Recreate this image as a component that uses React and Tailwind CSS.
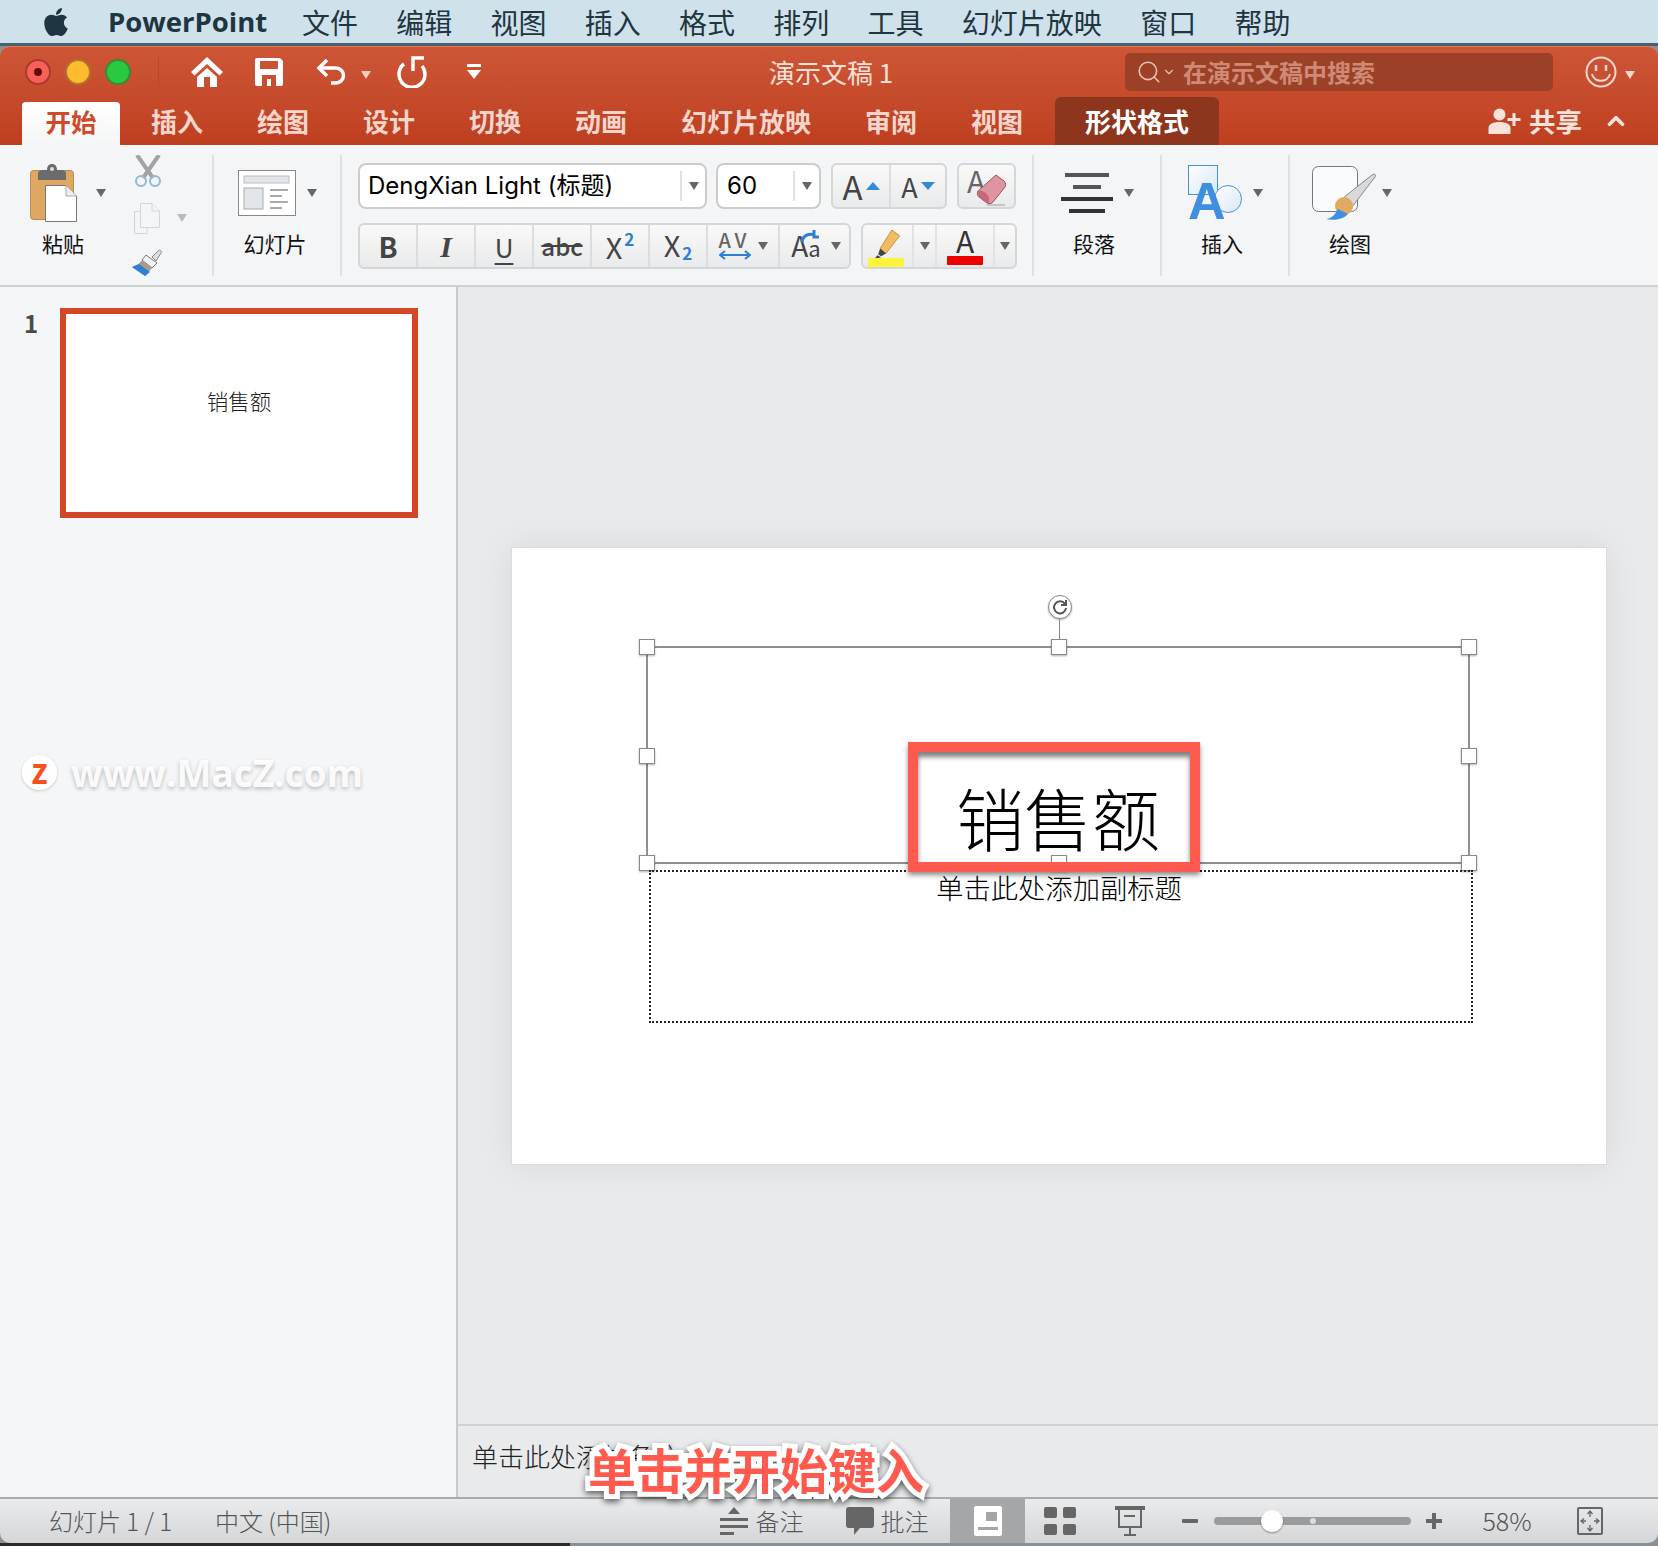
import { FaApple } from 'react-icons/fa'
import { Search, ChevronDown, ChevronUp } from 'lucide-react'

const menuItems = ['文件', '编辑', '视图', '插入', '格式', '排列', '工具', '幻灯片放映', '窗口', '帮助']
const tabs = ['插入', '绘图', '设计', '切换', '动画', '幻灯片放映', '审阅', '视图']

function Arrow({ className = 'border-t-[#666]' }) {
  return <span className={`inline-block w-0 h-0 border-x-[5px] border-x-transparent border-t-[8px] ${className}`} />
}

function HomeIcon() {
  return (
    <svg width="32" height="30" viewBox="0 0 32 30" fill="#fff">
      <path d="M16 0 32 15 28.500 18.500 16 7 3.500 18.500 0 15Z" />
      <path d="M6 20 16 11 26 20V30H19V20H13V30H6Z" />
    </svg>
  )
}

function SaveIcon() {
  return (
    <svg width="28" height="28" viewBox="0 0 28 28" fill="#fff" fillRule="evenodd">
      <path d="M2 0H25L28 3V26A2 2 0 0 1 26 28H2A2 2 0 0 1 0 26V2A2 2 0 0 1 2 0ZM5 3V11H23V3ZM7 17V28H21V17ZM12 21H16V28H12Z" />
    </svg>
  )
}

function UndoIcon() {
  return (
    <svg width="32" height="28" viewBox="0 0 32 28" fill="none" stroke="#fff" strokeWidth="3.500">
      <path d="M11 2 3 10 11 18" />
      <path d="M3 10H20A7.500 7.500 0 0 1 20 25H15" />
    </svg>
  )
}

function RedoIcon() {
  return (
    <svg width="33" height="32" viewBox="0 0 33 32" fill="none" stroke="#fff" strokeWidth="3.500">
      <path d="M9 8A13 13 0 1 0 27 10" />
      <path d="M18 15V2H29" />
    </svg>
  )
}

function SmileyIcon() {
  return (
    <svg width="32" height="32" viewBox="0 0 32 32" fill="none" stroke="#f5d9d0" strokeWidth="2">
      <circle cx="16" cy="16" r="14.500" />
      <path d="M11 9V15M21 9V15" strokeWidth="2.500" />
      <path d="M7 18C9 27 23 27 25 18" />
    </svg>
  )
}

function ShareIcon() {
  return (
    <svg width="33" height="26" viewBox="0 0 32 26" fill="#f8e2da">
      <circle cx="11" cy="6.500" r="6" />
      <path d="M0 26V20C0 16 5 14 11 14S22 16 22 20V26Z" />
      <path d="M24 5h3v5h5v3h-5v5h-3v-5h-5v-3h5Z" />
    </svg>
  )
}

function PasteIcon() {
  return (
    <svg width="47" height="58" viewBox="0 0 47 58">
      <rect x="0.500" y="6.500" width="43" height="49" rx="3" fill="#dfa862" stroke="#b88a4e" />
      <path d="M8 16V10C8 7 10 6 13 6H17C17 2 19 0 22 0S27 2 27 6H31C34 6 36 7 36 10V16Z" fill="#6b6b6b" />
      <circle cx="22" cy="5" r="2" fill="#ddd" />
      <path d="M15.500 21.500H36L46.500 32V57.500H15.500Z" fill="#fff" stroke="#777" />
      <path d="M36 21.500V32H46.500" fill="#eee" stroke="#aaa" />
    </svg>
  )
}

function ScissorsIcon() {
  return (
    <svg width="28" height="32" viewBox="0 0 28 32" fill="none">
      <path d="M3 0 19 23M25 0 9 23" stroke="#a3a3a3" strokeWidth="4" />
      <circle cx="7" cy="26" r="5" stroke="#8fb8da" strokeWidth="2" />
      <circle cx="21" cy="26" r="5" stroke="#8fb8da" strokeWidth="2" />
    </svg>
  )
}

function CopyIcon() {
  return (
    <svg width="26" height="31" viewBox="0 0 26 31" fill="#f4f5f6" stroke="#d3d4d6">
      <path d="M.5 8.500H13V30.500H.5Z" />
      <path d="M6.500.5H18L25.500 8V24.500H6.500Z" />
      <path d="M18 .5V8H25.500" />
    </svg>
  )
}

function BrushIcon() {
  return (
    <svg width="32" height="28" viewBox="0 0 32 28">
      <path d="M22 8 28 2C30 0 32 2 31 4L26 12Z" fill="#ddd" stroke="#888" />
      <path d="M16 6 27 14 22 19 12 11Z" fill="#f2f2f2" stroke="#777" />
      <path d="M12 11 22 19 15 27 2 18C6 17 9 15 12 11Z" fill="#a89c90" />
      <path d="M2 18 9 15 20 23 15 27Z" fill="#2f7fd4" />
    </svg>
  )
}

function SlideIcon() {
  return (
    <svg width="58" height="46" viewBox="0 0 58 46" fill="none">
      <rect x=".5" y=".5" width="57" height="45" fill="#fff" stroke="#888" />
      <rect x="6" y="6" width="45" height="7" fill="#e3e6e9" stroke="#bbb" />
      <rect x="6" y="18" width="19" height="21" fill="#e3e6e9" stroke="#aaa" />
      <path d="M32 20H50M32 26H44M32 32H50M32 38H44" stroke="#aaa" strokeWidth="2" />
    </svg>
  )
}

function EraserIcon() {
  return (
    <svg width="32" height="32" viewBox="0 0 32 32">
      <path d="M12 31H30" stroke="#c4c4c4" strokeWidth="2" />
      <path d="M21 1 29 7C31 9 31 11 30 13L18 28C16 30 14 30 12 29L4 23C2 21 2 19 3 17Z" fill="#dd95a2" stroke="#a14d5e" />
      <path d="M3 17 C8 16 12 19 14 24L14 30 4 23Z" fill="#c4687a" />
    </svg>
  )
}

function MarkerIcon() {
  return (
    <svg width="28" height="30" viewBox="0 0 28 30">
      <path d="M20 0 28 6 14 24 8 19Z" fill="#f2bc63" stroke="#c9913d" />
      <path d="M8 19 14 24 9 27 6 25Z" fill="#444" />
      <path d="M5 26 9 28 2 30Z" fill="#444" />
    </svg>
  )
}

function ParagraphIcon() {
  return (
    <div className="flex flex-col items-center gap-[8px] w-[52px]">
      <div className="h-[4px] w-[44px] bg-[#555]" />
      <div className="h-[4px] w-[28px] bg-[#555]" />
      <div className="h-[4px] w-[52px] bg-[#333]" />
      <div className="h-[4px] w-[36px] bg-[#333]" />
    </div>
  )
}

function InsertIcon() {
  return (
    <div className="relative w-[54px] h-[56px]">
      <svg width="54" height="56" viewBox="0 0 54 56">
        <defs>
          <linearGradient id="insertFill" x1="0" y1="0" x2="1" y2="1">
            <stop offset="0" stopColor="#fff" />
            <stop offset="1" stopColor="#d6e7f6" />
          </linearGradient>
        </defs>
        <rect x=".5" y=".5" width="29" height="29" fill="url(#insertFill)" stroke="#4a90d9" />
        <circle cx="40" cy="34" r="13.500" fill="url(#insertFill)" stroke="#4a90d9" />
      </svg>
      <span className="absolute left-0 top-[13px] text-[52px] leading-[46px] font-bold text-[#3f8fe0] font-['Liberation_Sans',sans-serif]">A</span>
    </div>
  )
}

function DrawIcon() {
  return (
    <svg width="64" height="54" viewBox="0 0 64 54">
      <rect x=".5" y=".5" width="45" height="45" rx="6" fill="#fafbfc" stroke="#777" />
      <path d="M31 32 60 9C63 7 64 9 63 11L40 41Z" fill="#d7d9db" stroke="#888" />
      <circle cx="32" cy="40" r="9" fill="#e0aa63" />
      <path d="M14 53C22 52 24 46 26 43L36 48C32 53 22 55 14 53Z" fill="#3f8fe0" />
    </svg>
  )
}

function Handle({ className }) {
  return <div className={`absolute w-[16px] h-[16px] bg-white border border-[#888] shadow-[0_1px_2px_rgba(0,0,0,0.3)] ${className}`} />
}

function Seg({ w, border = true, children }) {
  return (
    <div className={`${w} h-full flex items-center justify-center relative ${border ? 'border-r-2 border-[#dcdddf]' : ''}`}>
      {children}
    </div>
  )
}

const groupCls = 'flex h-[46px] rounded-[6px] border-2 border-[#d5d6d8] bg-linear-to-b from-[#f9f9f9] to-[#e9eaeb] text-[#444]'

function FontGroup() {
  return (
    <div className="flex flex-col gap-[14px] mt-[10px] pt-[8px] pl-[16px] w-[692px] border-r-2 border-[#dfe0e2] mb-[9px]">
      <div className="flex">
        <div className="w-[349px] h-[46px] rounded-[8px] border-2 border-[#ccc] bg-white flex items-center pl-[8px]">
          <span className="text-[24px] text-black w-[312px] whitespace-nowrap font-['Inter','Noto_Sans_CJK_SC',sans-serif]">DengXian Light (标题)</span>
          <div className="flex items-center justify-center flex-1 h-[30px] border-l-2 border-[#e2e2e2]"><Arrow /></div>
        </div>
        <div className="w-[105px] h-[46px] ml-[9px] rounded-[8px] border-2 border-[#ccc] bg-white flex items-center pl-[9px]">
          <span className="text-[24px] text-black w-[66px] font-['Inter',sans-serif]">60</span>
          <div className="flex items-center justify-center flex-1 h-[30px] border-l-2 border-[#e2e2e2]"><Arrow /></div>
        </div>
        <div className={`${groupCls} w-[116px] ml-[10px]`}>
          <Seg w="w-[58px]">
            <span className="text-[33px] leading-none">A</span>
            <span className="ml-[3px] w-0 h-0 border-x-[7px] border-x-transparent border-b-[8px] border-b-[#2f8ad8]" />
          </Seg>
          <Seg w="flex-1" border={false}>
            <span className="text-[27px] leading-none">A</span>
            <span className="ml-[3px] w-0 h-0 border-x-[7px] border-x-transparent border-t-[8px] border-t-[#2f8ad8]" />
          </Seg>
        </div>
        <div className={`${groupCls} w-[59px] ml-[10px] relative`}>
          <span className="absolute left-[8px] -top-[7px] text-[30px] text-[#666]">A</span>
          <div className="absolute left-[16px] top-[9px]"><EraserIcon /></div>
        </div>
      </div>
      <div className="flex">
        <div className={`${groupCls} w-[493px]`}>
          <Seg w="w-[58px]"><span className="text-[28px] font-bold">B</span></Seg>
          <Seg w="w-[58px]"><span className="text-[30px] font-bold italic font-['Liberation_Serif',serif]">I</span></Seg>
          <Seg w="w-[58px]"><span className="text-[26px] underline underline-offset-[5px]">U</span></Seg>
          <Seg w="w-[58px]"><span className="text-[24px] font-medium line-through">abc</span></Seg>
          <Seg w="w-[58px]">
            <span className="text-[29px] leading-none">X</span>
            <span className="text-[17px] font-bold text-[#2f7fd4] -mt-[14px] ml-[2px]">2</span>
          </Seg>
          <Seg w="w-[58px]">
            <span className="text-[29px] leading-none -mt-[4px]">X</span>
            <span className="text-[17px] font-bold text-[#2f7fd4] mt-[14px] ml-[2px]">2</span>
          </Seg>
          <Seg w="w-[72px]">
            <div className="flex flex-col items-center mr-[7px] -mt-[3px]">
              <span className="text-[20px] leading-[20px] font-medium tracking-[4px] text-[#666]">AV</span>
              <svg width="32" height="10" viewBox="0 0 32 10" fill="none" stroke="#2f7fd4" strokeWidth="2">
                <path d="M1 5H31M6 1 1 5 6 9M26 1 31 5 26 9" />
              </svg>
            </div>
            <Arrow />
          </Seg>
          <Seg w="flex-1" border={false}>
            <div className="relative w-[36px] mr-[7px] text-center">
              <span className="text-[28px] leading-none">A</span>
              <span className="text-[22px] leading-none">a</span>
              <svg className="absolute left-[12px] -top-[1px]" width="20" height="14" viewBox="0 0 20 14" fill="none" stroke="#2f7fd4" strokeWidth="3">
                <path d="M2 12C3 5 9 3 15 5M14 0V7H19" />
              </svg>
            </div>
            <Arrow />
          </Seg>
        </div>
        <div className={`${groupCls} w-[156px] ml-[10px]`}>
          <div className="w-[49px] h-full flex flex-col items-center pt-[5px] pr-[3px]">
            <MarkerIcon />
            <div className="w-[36px] h-[9px] bg-[#fbf43a] -mt-[1px] rounded-[1px]" />
          </div>
          <div className="w-[25px] h-full flex items-center justify-center border-x-2 border-[#e2e3e5]"><Arrow /></div>
          <div className="w-[56px] h-full flex flex-col items-center">
            <span className="text-[30px] leading-[31px] text-[#333]">A</span>
            <div className="w-[36px] h-[9px] bg-[#ee0000] rounded-[1px]" />
          </div>
          <div className="flex-1 h-full flex items-center justify-center border-l-2 border-[#e2e3e5]"><Arrow /></div>
        </div>
      </div>
    </div>
  )
}

function BigButton({ icon, label, width, pad, labelW = 'w-[66px]' }) {
  return (
    <div className={`${width} ${pad} mb-[9px] mt-[10px] border-r-2 border-[#dfe0e2] flex flex-col`}>
      <div className="h-[75px] flex items-center gap-[11px]">
        {icon}
        <Arrow />
      </div>
      <span className={`text-[21px] leading-[30px] -mt-[2px] text-[#111] ${labelW} text-center whitespace-nowrap`}>{label}</span>
    </div>
  )
}

function Ribbon() {
  return (
    <div className="h-[142px] flex border-b-2 border-[#cfd0d2] bg-[#f4f5f6]">
      <div className="w-[214px] mt-[10px] mb-[9px] border-r-2 border-[#dfe0e2] flex pl-[30px]">
        <div className="w-[104px] flex flex-col">
          <div className="h-[75px] flex items-center gap-[19px]">
            <PasteIcon />
            <Arrow />
          </div>
          <span className="text-[21px] leading-[30px] -mt-[2px] text-[#111] pl-[12px]">粘贴</span>
        </div>
        <div className="flex flex-col justify-between h-[122px] w-[60px]">
          <ScissorsIcon />
          <div className="flex items-center gap-[17px]">
            <CopyIcon />
            <Arrow className="border-t-[#bbb]" />
          </div>
          <div className="-ml-[4px]"><BrushIcon /></div>
        </div>
      </div>
      <BigButton icon={<SlideIcon />} label="幻灯片" width="w-[128px]" pad="pl-[24px] pr-0" labelW="w-[74px]" />
      <FontGroup />
      <BigButton icon={<ParagraphIcon />} label="段落" width="w-[128px]" pad="pl-[27px]" />
      <BigButton icon={<InsertIcon />} label="插入" width="w-[128px]" pad="pl-[26px]" labelW="w-[68px]" />
      <div className="mt-[10px] mb-[9px] pl-[22px] flex flex-col">
        <div className="h-[75px] flex items-center gap-[6px]">
          <DrawIcon />
          <Arrow />
        </div>
        <span className="text-[21px] leading-[30px] -mt-[2px] text-[#111] w-[76px] text-center">绘图</span>
      </div>
    </div>
  )
}

function TitleBar() {
  return (
    <div className="rounded-t-[10px] bg-linear-to-b from-[#cd5636] to-[#be3f20] border-t border-[#de7a5d]">
      <div className="h-[49px] flex items-center relative">
        <div className="flex gap-[14px] pl-[25px]">
          <div className="w-[26px] h-[26px] rounded-full bg-[#fb5f57] border-2 border-[#a93a33] flex items-center justify-center">
            <div className="w-[8px] h-[8px] rounded-full bg-[#5e0d09]" />
          </div>
          <div className="w-[26px] h-[26px] rounded-full bg-[#fdbb2e] border-2 border-[#b3742b]" />
          <div className="w-[26px] h-[26px] rounded-full bg-[#2ac940] border-2 border-[#2f8f3a]" />
        </div>
        <div className="w-px h-[30px] bg-[#b44a2f] ml-[27px]" />
        <div className="ml-[32px]"><HomeIcon /></div>
        <div className="ml-[32px]"><SaveIcon /></div>
        <div className="ml-[33px]"><UndoIcon /></div>
        <div className="ml-[13px]"><Arrow className="border-t-[#f2cfc4]" /></div>
        <div className="ml-[24px]"><RedoIcon /></div>
        <div className="ml-[39px] flex flex-col items-center gap-[3px]">
          <div className="w-[14px] h-[3px] bg-white" />
          <span className="w-0 h-0 border-x-[7px] border-x-transparent border-t-[9px] border-t-white" />
        </div>
        <span className="ml-[288px] text-[26px] text-[#f8e0d8] w-[356px]">演示文稿 1</span>
        <div className="w-[428px] h-[38px] rounded-[5px] bg-[#9c4128] flex items-center pl-[11px] text-[#e9c2b5]">
          <Search size={26} strokeWidth={1.500} />
          <ChevronDown size={14} strokeWidth={2} />
          <span className="ml-[7px] text-[24px] font-semibold text-[#cf8a75]">在演示文稿中搜索</span>
        </div>
        <div className="ml-[32px]"><SmileyIcon /></div>
        <div className="ml-[8px]"><Arrow className="border-t-[#f5d9d0]" /></div>
      </div>
      <div className="h-[49px] flex items-end">
        <div className="ml-[22px] h-[43px] pb-[5px] w-[98px] rounded-t-[4px] bg-linear-to-b from-white to-[#f4f5f6] text-[#d0492a] text-[25.500px] font-semibold flex items-center justify-center">开始</div>
        <div className="ml-[31px] h-[44px] pb-[5px] flex items-center gap-[54px] text-[26px] font-semibold text-[#f6d6cc]">
          {tabs.map((tab, i) => <span key={i}>{tab}</span>)}
        </div>
        <div className="ml-[32px] h-[48px] pb-[2px] w-[164px] rounded-t-[6px] bg-[#8e351d] flex items-center justify-center text-white text-[26px] font-semibold">形状格式</div>
        <div className="ml-auto h-[44px] pb-[5px] flex items-center text-[#f8e2da] text-[26.500px] font-semibold pr-[29px]">
          <ShareIcon />
          <span className="ml-[8px]">共享</span>
          <ChevronUp size={26} strokeWidth={3.500} className="ml-[21px]" />
        </div>
      </div>
    </div>
  )
}

function Slide() {
  return (
    <div className="relative w-[1096px] h-[618px] bg-white border border-[#dcdcdc] shadow-[0_0_34px_rgba(0,0,0,0.08)]">
      {/* rotate handle */}
      <div className="absolute left-[536px] top-[47px] w-[24px] h-[24px] rounded-full bg-white border border-[#888] shadow-[0_1px_2px_rgba(0,0,0,0.3)] flex items-center justify-center">
        <svg width="16" height="16" viewBox="0 0 16 16" fill="none" stroke="#555" strokeWidth="2">
          <path d="M13 5A6 6 0 1 0 14 9" />
          <path d="M14 1V6H9" />
        </svg>
      </div>
      <div className="absolute left-[547px] top-[71px] w-px h-[22px] bg-[#888]" />

      {/* title box */}
      <div className="absolute left-[134px] top-[98px] w-[824px] h-[218px] border-2 border-[#8f8f8f] flex justify-center items-end">
        <span className="text-[68px] leading-[84px] pb-[3px] font-light text-black">销售额</span>
        <Handle className="-left-[9px] -top-[9px]" />
        <Handle className="left-[403px] -top-[9px]" />
        <Handle className="-right-[9px] -top-[9px]" />
        <Handle className="-left-[9px] top-[100px]" />
        <Handle className="-right-[9px] top-[100px]" />
        <Handle className="-left-[9px] -bottom-[9px]" />
        <Handle className="left-[403px] -bottom-[9px]" />
        <Handle className="-right-[9px] -bottom-[9px]" />
      </div>

      {/* subtitle box */}
      <div className="absolute left-[137px] top-[322px] w-[824px] h-[153px] border-2 border-dotted border-[#222] flex justify-center pr-[4px]">
        <span className="text-[27.300px] leading-[30px] font-light text-black">单击此处添加副标题</span>
      </div>

      {/* red callout */}
      <div className="absolute left-[396px] top-[194px] w-[292px] h-[130px] border-[10px] border-[#ff5a4d] shadow-[0_3px_5px_rgba(0,0,0,0.45),inset_0_5px_5px_rgba(0,0,0,0.5)]" />
    </div>
  )
}

function StatusBar() {
  return (
    <div className="h-[46px] rounded-b-[10px] border-t-2 border-[#a9aaac] bg-linear-to-b from-[#eaebec] to-[#d5d6d8] flex items-center text-[24px] font-light text-[#555]">
      <span className="ml-[49px] w-[166px]">幻灯片 1 / 1</span>
      <span>中文 (中国)</span>
      <div className="ml-[389px] flex flex-col items-center gap-[4px]">
        <span className="w-0 h-0 border-x-[6px] border-x-transparent border-b-[7px] border-b-[#666]" />
        <div className="w-[28px] h-[3px] bg-[#666]" />
        <div className="w-[28px] h-[3px] bg-[#666]" />
        <div className="w-[14px] h-[3px] bg-[#666] self-start" />
      </div>
      <span className="ml-[7px]">备注</span>
      <svg className="ml-[43px]" width="28" height="28" viewBox="0 0 28 28" fill="#666">
        <path d="M3 0H25A3 3 0 0 1 28 3V18A3 3 0 0 1 25 21H14L8 28V21H3A3 3 0 0 1 0 18V3A3 3 0 0 1 3 0Z" />
      </svg>
      <span className="ml-[6px]">批注</span>
      <div className="ml-[22px] w-[75px] h-full bg-[#a5a6a8] flex items-center justify-center">
        <svg width="28" height="30" viewBox="0 0 28 30" fill="#fff" fillRule="evenodd">
          <path d="M2 0H26A2 2 0 0 1 28 2V28A2 2 0 0 1 26 30H2A2 2 0 0 1 0 28V2A2 2 0 0 1 2 0ZM12 6V15H23V6ZM4 21V24H24V21Z" />
        </svg>
      </div>
      <div className="ml-[19px] grid grid-cols-2 gap-[6px]">
        <div className="w-[13px] h-[11px] rounded-[2px] bg-[#666]" />
        <div className="w-[13px] h-[11px] rounded-[2px] bg-[#666]" />
        <div className="w-[13px] h-[11px] rounded-[2px] bg-[#666]" />
        <div className="w-[13px] h-[11px] rounded-[2px] bg-[#666]" />
      </div>
      <svg className="ml-[39px]" width="30" height="30" viewBox="0 0 30 30" fill="none" stroke="#666" strokeWidth="2">
        <path d="M0 2H30" strokeWidth="4" />
        <path d="M4 2V21H26V2M15 21V28M9 29H21M9 10H20" />
      </svg>
      <div className="ml-[37px] w-[16px] h-[4px] rounded-[1px] bg-[#666]" />
      <div className="ml-[16px] relative w-[197px] h-[8px] rounded-full bg-[#9b9b9c]">
        <div className="absolute left-[47px] -top-[7px] w-[22px] h-[22px] rounded-full bg-white shadow-[0_1px_2px_rgba(0,0,0,0.4)]" />
        <div className="absolute left-[96px] top-[1px] w-[6px] h-[6px] rounded-full bg-[#ddd]" />
      </div>
      <div className="ml-[15px] relative w-[16px] h-[16px]">
        <div className="absolute left-0 top-[6px] w-[16px] h-[4px] bg-[#666]" />
        <div className="absolute left-[6px] top-0 w-[4px] h-[16px] bg-[#666]" />
      </div>
      <span className="ml-[40px] text-[25px]">58%</span>
      <svg className="ml-[45px]" width="26" height="28" viewBox="0 0 26 28" fill="none" stroke="#666" strokeWidth="2">
        <rect x="1" y="1" width="24" height="26" rx="1" />
        <path d="M13 5V10M10.500 7 13 4 15.500 7M13 23V18M10.500 21 13 24 15.500 21M5 14H9M7 11.500 4 14 7 16.500M21 14H17M19 11.500 22 14 19 16.500" strokeWidth="1.300" />
      </svg>
    </div>
  )
}

export default function App() {
  return (
    <div className="relative w-full h-[1546px] flex flex-col overflow-hidden bg-[#8b9094] font-['Noto_Sans_CJK_SC','Noto_Sans',sans-serif]">

      {/* menu bar */}
      <div className="h-[43px] bg-[#cfe2ec] flex items-center text-[#1f3540] shrink-0">
        <FaApple size={32} className="ml-[40px]" />
        <span className="ml-[36px] text-[27.500px] font-bold w-[194px] whitespace-nowrap font-['Open_Sans',sans-serif]">PowerPoint</span>
        <div className="flex gap-[38.250px] text-[28px]">
          {menuItems.map(item => <span key={item}>{item}</span>)}
        </div>
      </div>
      <div className="h-[3px] bg-[#47626f] shrink-0" />

      <TitleBar />
      <Ribbon />

      {/* work area */}
      <div className="flex-1 flex min-h-0 bg-[#f5f6f8]">
        <aside className="w-[458px] shrink-0 border-r-2 border-[#c8c9cb] flex pt-[21px] pl-[24px]">
          <span className="w-[36px] text-[24px] leading-[30px] font-bold text-[#4a4a4a]">1</span>
          <div className="w-[358px] h-[210px] border-[6px] border-[#d34727] bg-white flex justify-center pt-[72px]">
            <span className="text-[21.500px] leading-[30px] font-light text-[#222]">销售额</span>
          </div>
        </aside>
        <main className="flex-1 flex flex-col bg-[#e9eaec]">
          <div className="flex-1 flex items-center justify-center pl-[2px]">
            <Slide />
          </div>
          <div className="h-[73px] border-t-2 border-[#d0d1d3] pl-[14px] pt-[12px] text-[26px] leading-[36px] font-light text-[#222]">
            单击此处添加备注
          </div>
        </main>
      </div>

      <StatusBar />
      <div className="h-[3px] shrink-0 flex"><div className="w-[570px] bg-[#2a2a2a]" /></div>

      {/* watermark */}
      <div className="absolute left-[22px] top-[754px] flex items-center">
        <div className="w-[35px] h-[35px] rounded-full bg-white/90 shadow-[0_1px_3px_rgba(0,0,0,0.2)] flex items-center justify-center text-[#f4511e] text-[26px] font-black leading-none">Z</div>
        <span className="ml-[14px] text-[37px] leading-none font-bold text-white/90 font-['Open_Sans',sans-serif] [text-shadow:0_2px_4px_rgba(0,0,0,0.25)]">www.MacZ.com</span>
      </div>

      {/* caption */}
      <div className="absolute left-[588px] top-[1436px] text-[48px] leading-[64px] font-bold text-[#ff5a4d] [-webkit-text-stroke:10px_white] [paint-order:stroke_fill] [filter:drop-shadow(0_3px_3px_rgba(0,0,0,0.6))]">
        单击并开始键入
      </div>
    </div>
  )
}
